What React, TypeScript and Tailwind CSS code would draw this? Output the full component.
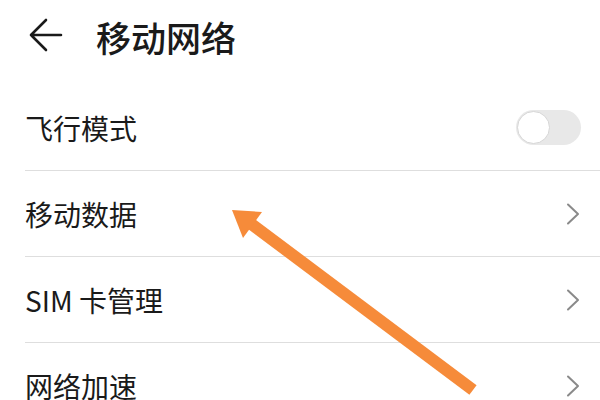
import React from "react";

const Chevron = () => (
  <svg width="14" height="22" viewBox="0 0 14 22" fill="none">
    <path d="M2 1.5 L12 11 L2 20.5" stroke="#8a8a8a" strokeWidth="2" strokeLinecap="round" strokeLinejoin="round" />
  </svg>
);

const Row = ({ label, right, last }: { label: string; right: React.ReactNode; last?: boolean }) => (
  <div className={`flex h-[86px] items-center justify-between pr-[20px] ${last ? "" : "border-b border-[#dedede]"}`}>
    <span className="text-[28px] leading-none text-[#1a1a1a]">{label}</span>
    {right}
  </div>
);

export default function App() {
  return (
    <div
      className="relative h-[400px] w-[600px] overflow-hidden bg-white"
      style={{ fontFamily: '"Noto Sans CJK SC", "Noto Sans", sans-serif' }}
    >
      <div className="flex h-[85px] items-start pt-[16px] pl-[28px]">
        <svg width="36" height="36" viewBox="0 0 36 36" fill="none" className="mt-[2px]">
          <path d="M33 17 H3 M18 2 L3 17 L18 32" stroke="#1a1a1a" strokeWidth="2.6" strokeLinecap="round" strokeLinejoin="round" />
        </svg>
        <span className="ml-[32px] text-[35px] leading-[42px] font-medium text-[#1a1a1a]">移动网络</span>
      </div>
      <div className="ml-[25px]">
        <Row
          label="飞行模式"
          right={
            <div className="mr-[-1px] flex h-[35px] w-[65px] items-center rounded-full bg-[#e8e8e8]">
              <div className="h-[33px] w-[33px] rounded-full border border-[#d6d6d6] bg-white ml-[1px]" />
            </div>
          }
        />
        <Row label="移动数据" right={<Chevron />} />
        <Row label="SIM 卡管理" right={<Chevron />} />
        <Row label="网络加速" right={<Chevron />} last />
      </div>
      <svg className="pointer-events-none absolute left-0 top-0" width="600" height="400" viewBox="0 0 600 400">
        <line x1="473" y1="390" x2="250" y2="223" stroke="#f68b3a" strokeWidth="12" />
        <polygon points="232,210 262,212 243,238" fill="#f68b3a" />
      </svg>
    </div>
  );
}
